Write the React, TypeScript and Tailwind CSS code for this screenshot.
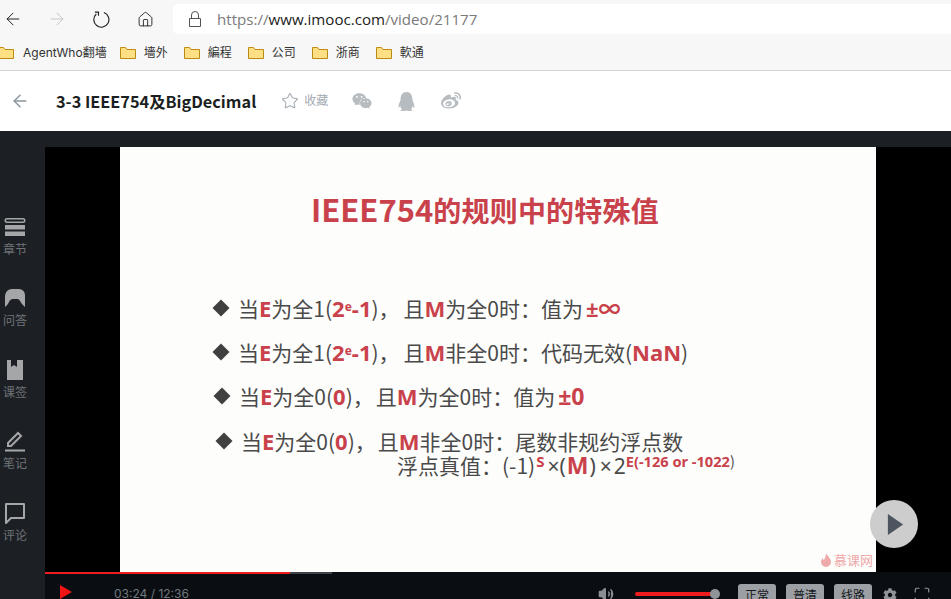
import { ArrowLeft, ArrowRight, Home, Star, Volume2, Maximize } from "lucide-react";
import { FaWeixin, FaQq, FaWeibo, FaCog } from "react-icons/fa";
import type { ReactNode } from "react";

const cjk = "font-['Inter','Noto_Sans_CJK_SC',sans-serif]";

function Folder() {
  return (
    <svg width="16" height="13" viewBox="0 0 16 13" className="shrink-0">
      <path d="M0.5 1.5h5l1.5 2h8.5v9h-15z" fill="#ffdf83" stroke="#bf8a10" strokeWidth="1" />
    </svg>
  );
}

function Bookmark({ label }: { label: string }) {
  return (
    <div className="flex items-center">
      <Folder />
      <span className="ml-[8px] text-[12px] leading-none text-[#333]">{label}</span>
    </div>
  );
}

function SideItem({ icon, label }: { icon: ReactNode; label: string }) {
  return (
    <div className="flex h-[72px] flex-col items-center">
      <div className="flex h-[24px] w-[24px] items-center justify-center">{icon}</div>
      <span className="mt-[3px] text-[12px] leading-[16px] text-[#6f7377]">{label}</span>
    </div>
  );
}

function R({ children, className = "" }: { children: ReactNode; className?: string }) {
  return <span className={`font-['Noto_Sans','Noto_Sans_CJK_SC',sans-serif] font-bold text-[#c9424b] ${className}`}>{children}</span>;
}

function Line({ children, className }: { children: ReactNode; className: string }) {
  return (
    <div className={`flex items-center whitespace-nowrap text-[21px] text-[#4a4a4a] ${className}`}>
      <span className="h-[12px] w-[12px] shrink-0 origin-center rotate-45 bg-[#404040]" />
      <span className="ml-[11px]">{children}</span>
    </div>
  );
}

function QualityBtn({ label }: { label: string }) {
  return (
    <div className="flex h-[24px] w-[38px] items-center justify-center rounded-[3px] bg-[#9c9fa3] text-[12px] text-[#14181c]">
      {label}
    </div>
  );
}

export default function App() {
  return (
    <div className={`flex h-[599px] w-[951px] flex-col overflow-hidden bg-white ${cjk}`}>
      {/* browser chrome */}
      <div className="h-[71px] shrink-0 border-b border-[#d4d4d4] bg-[#f7f7f7]">
        <div className="flex h-[37px] items-center pt-[1px]">
          <ArrowLeft size={20} strokeWidth={1.2} className="ml-[3px] text-[#222]" />
          <ArrowRight size={20} strokeWidth={1.2} className="ml-[24px] text-[#c4c4c4]" />
          <svg width="17" height="17" viewBox="0 0 18 18" fill="none" stroke="#222" strokeWidth="1.2" className="ml-[26px]">
            <path d="M11.5 1.6A8 8 0 1 1 3.5 3.2" />
            <path d="M2 1.2h3.8V5" />
          </svg>
          <Home size={17} strokeWidth={1.3} className="ml-[27px] text-[#222]" />
          <div className="ml-[19px] flex h-[30px] flex-1 items-center rounded-l-[5px] bg-white pl-[16px]">
            <svg width="12" height="16" viewBox="0 0 12 16" fill="none" stroke="#555" strokeWidth="1">
              <path d="M0.5 7.5h11v8h-11z" />
              <path d="M2.5 7.5V4a3.5 3.5 0 0 1 7 0v3.5" />
            </svg>
            <span className="ml-[16px] font-['Open_Sans',sans-serif] text-[15.1px] leading-[28px] text-[#7a7a7a]">
              https://<span className="text-[#222]">www.imooc.com</span>/video/21177
            </span>
          </div>
        </div>
        <div className="-ml-[1px] flex h-[31px] items-center">
          <div className="-ml-[1px] w-0 overflow-visible">
            <Folder />
          </div>
          <span className="ml-[25px] text-[12px] leading-none text-[#333]">AgentWho翻墻</span>
          <div className="ml-[13px] flex gap-[16px]">
            <Bookmark label="墻外" />
            <Bookmark label="編程" />
            <Bookmark label="公司" />
            <Bookmark label="浙商" />
            <Bookmark label="軟通" />
          </div>
        </div>
      </div>

      {/* course header */}
      <div className="flex h-[60px] shrink-0 items-center bg-white">
        <ArrowLeft size={20} strokeWidth={1.8} className="ml-[10px] text-[#8c96a0]" />
        <span className="ml-[26px] font-['Noto_Sans_CJK_SC',sans-serif] text-[16.3px] font-bold text-[#1c1f21]">3-3 IEEE754及BigDecimal</span>
        <Star size={18} strokeWidth={1.4} className="ml-[25px] text-[#a3aab2]" />
        <span className="ml-[5px] text-[12px] text-[#a3aab2]">收藏</span>
        <FaWeixin size={20} className="ml-[24px] text-[#b7bcc1]" />
        <FaQq size={19} className="ml-[25px] text-[#b7bcc1]" />
        <FaWeibo size={20} className="ml-[25px] text-[#b7bcc1]" />
      </div>

      {/* player */}
      <div className="flex min-h-0 flex-1 flex-col bg-[#1c2024]">
        <div className="flex min-h-0 flex-1">
          <div className="flex w-[45px] shrink-0 flex-col items-center pt-[84px] pr-[15px]">
            <SideItem
              label="章节"
              icon={
                <svg width="22" height="20" viewBox="0 0 22 20" fill="#a4a6a8">
                  <path d="M3 1h16a2 2 0 0 1 0 5H3a2 2 0 0 1 0-5zm0 1.5a1 1 0 0 0 0 2h16a1 1 0 0 0 0-2z" fillRule="evenodd" />
                  <rect x="1" y="8" width="20" height="4.5" />
                  <rect x="1" y="14.5" width="20" height="4.5" />
                </svg>
              }
            />
            <SideItem
              label="问答"
              icon={
                <svg width="22" height="20" viewBox="0 0 22 20" fill="#a4a6a8">
                  <path d="M1 19V8a7 7 0 0 1 7-7h7a6 6 0 0 1 6 6v12l-3-3-2-3c-1-2-2-2-4-2H9c-3 0-4 3-5 5z" />
                </svg>
              }
            />
            <SideItem
              label="课签"
              icon={
                <svg width="18" height="20" viewBox="0 0 18 20" fill="#a4a6a8">
                  <path d="M1 0h4v7l3-2 3 2V0h6v20H1z" />
                </svg>
              }
            />
            <SideItem
              label="笔记"
              icon={
                <svg width="22" height="22" viewBox="0 0 22 22" fill="none" stroke="#a4a6a8" strokeWidth="2">
                  <path d="M4 16v-3L14 3l3 3L7 16z" />
                  <path d="M1 20.5h20" />
                </svg>
              }
            />
            <SideItem
              label="评论"
              icon={
                <svg width="22" height="22" viewBox="0 0 22 22" fill="none" stroke="#a4a6a8" strokeWidth="2">
                  <path d="M2 2h18v14H7l-5 5z" strokeLinejoin="round" />
                </svg>
              }
            />
          </div>

          <div className="relative mt-[16px] flex flex-1 justify-center bg-black">
            <div className="flex h-full w-[756px] flex-col bg-[#fdfdfc] font-['Noto_Sans_CJK_SC',sans-serif]">
              <div className="mt-[40px] ml-[191px] flex h-[44px] items-baseline whitespace-nowrap text-[28px] leading-[44px] font-bold text-[#c9424b]">
                <span className="text-[31px]">IEEE754</span>
                <span className="tracking-[0.2px]">的规则中的特殊值</span>
              </div>
              <Line className="mt-[63px] ml-[95px] leading-[28px]">
                当<R className="text-[22px]">E</R>为全1(<R className="text-[22px]">2<sup className="text-[12px]">e</sup>-1</R>)，<span className="ml-[4px]">且</span><R className="text-[22px]">M</R>为全0时：值为<R className="ml-[3px] text-[22px]">±∞</R>
              </Line>
              <Line className="mt-[16px] ml-[95px] leading-[28px]">
                当<R className="text-[22px]">E</R>为全1(<R className="text-[22px]">2<sup className="text-[12px]">e</sup>-1</R>)，<span className="ml-[4px]">且</span><R className="text-[22px]">M</R>非全0时：代码无效(<R className="text-[22px]">NaN</R>)
              </Line>
              <Line className="mt-[16px] ml-[96px] leading-[28px]">
                当<R className="text-[22px]">E</R>为全0(<R className="text-[22px]">0</R>)，<span className="ml-[2px]">且</span><R className="text-[22px]">M</R>为全0时：值为<R className="ml-[3px] text-[23px]">±0</R>
              </Line>
              <Line className="mt-[20px] ml-[98px] leading-[22px]">
                当<R className="text-[22px]">E</R>为全0(<R className="text-[22px]">0</R>)，<span className="ml-[2px]">且</span><R className="text-[22px]">M</R>非全0时：尾数非规约浮点数
              </Line>
              <div className="mt-[1px] ml-[277px] whitespace-nowrap text-[21px] leading-[24px] text-[#4a4a4a]">
                浮点真值：(-1)
                <R><sup className="ml-[1px] text-[15px]">S</sup></R>
                <span className="ml-[3px] font-['Noto_Sans',sans-serif]">×(</span>
                <R className="ml-[1px] text-[23px]">M</R>
                <span className="ml-[1px] font-['Noto_Sans',sans-serif]">)</span>
                <span className="ml-[4px] font-['Noto_Sans',sans-serif]">×</span>
                <span className="ml-[2px] font-['Noto_Sans',sans-serif]">2</span>
                <sup className="text-[14.6px]"><R>E(-126 or -1022</R>)</sup>
              </div>
              <div className="mt-auto mb-[3px] mr-[3px] flex items-center justify-end gap-[2px] text-[13px] leading-[18px] text-[#eeaaa8]">
                <svg width="11" height="14" viewBox="0 0 11 14" fill="#eeaaa8">
                  <path d="M5 0c1 3 5 5 5 9a5 5 0 0 1-10 0c0-2 1-3 2-4 0 1 0 2 1 2 1-2 2-4 2-7z" />
                </svg>
                慕课网
              </div>
            </div>
            <div className="absolute top-[353px] left-[825px] flex h-[48px] w-[48px] items-center justify-center rounded-full bg-[#cdcdcd]">
              <svg width="17" height="21" viewBox="0 0 16 22" className="ml-[3px]" fill="#4d5560">
                <path d="M0 0l16 11L0 22z" />
              </svg>
            </div>
          </div>
        </div>

        <div className="flex h-[27px] shrink-0">
          <div className="w-[45px] shrink-0" />
          <div className="flex flex-1 flex-col bg-[#0a0e12]">
            <div className="flex h-[2px] shrink-0">
              <div className="w-[245px] bg-[#ee1c1c]" />
              <div className="w-[42px] bg-[#3d4449]" />
            </div>
            <div className="flex h-[25px] items-start">
              <svg width="12" height="14" viewBox="0 0 12 14" className="mt-[11px] ml-[15px]" fill="#f01414">
                <path d="M0 0l12 7-12 7z" />
              </svg>
              <span className="mt-[12px] ml-[42px] text-[12px] leading-[16px] text-[#71777d]">03:24 / 12:36</span>
              <Volume2 size={16} className="mt-[12px] ml-[409px] fill-[#8a8e93] text-[#8a8e93]" />
              <div className="relative mt-[18px] ml-[21px] h-[4px] w-[80px] rounded-full bg-[#ee1c1c]">
                <div className="absolute top-[-3px] right-[-5px] h-[10px] w-[10px] rounded-full bg-[#8f9499]" />
              </div>
              <div className="mt-[10px] ml-[23px] flex gap-[10px]">
                <QualityBtn label="正常" />
                <QualityBtn label="普清" />
                <QualityBtn label="线路" />
              </div>
              <FaCog size={14} className="mt-[14px] ml-[11px] text-[#8f9499]" />
              <Maximize size={18} strokeWidth={1.6} className="mt-[12px] ml-[16px] text-[#8f9499]" />
            </div>
          </div>
        </div>
      </div>
    </div>
  );
}
